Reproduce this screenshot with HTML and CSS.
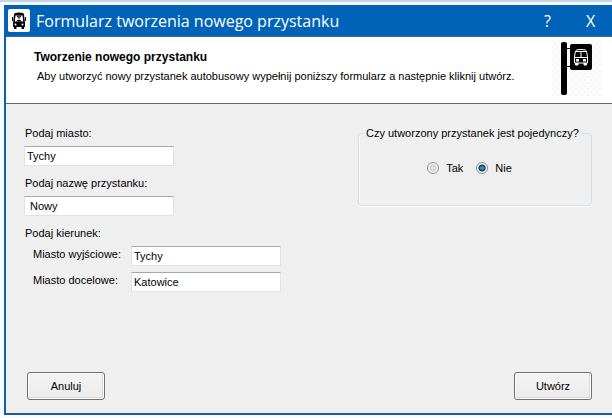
FILE: index.html
```html
<!DOCTYPE html>
<html lang="pl">
<head>
<meta charset="utf-8">
<title>Formularz tworzenia nowego przystanku</title>
<link rel="stylesheet" href="styles.css">
</head>
<body>
<form class="window">
  <header class="titlebar">
    <svg class="app-icon" viewBox="0 0 22 23" aria-hidden="true">
      <rect width="22" height="23" rx="2" fill="#fff"/>
      <path d="M6 5.500Q6 3.500 11 3.500T16 5.500L17 14V18H16V20H13.500V18H8.500V20H6V18H5V14Z" fill="#000"/>
      <path d="M7.500 6.500H14.500L15.200 12.500H6.800Z" fill="#fff"/>
      <path d="M9 7L11 9.500L13 7Z" stroke="#000" stroke-width=".8" fill="#888"/>
      <path d="M8 12.500L10 10.800H12L14 12.500Z" fill="#000"/>
      <path d="M4.500 8V12M17.500 8V12" stroke="#000"/>
      <circle cx="7.500" cy="15.500" r="1" fill="#fff"/><circle cx="14.500" cy="15.500" r="1" fill="#fff"/>
    </svg>
    <h1 class="title">Formularz tworzenia nowego przystanku</h1>
    <button class="caption-button" type="button">?</button>
    <button class="caption-button" type="button">X</button>
  </header>
  <section class="banner">
    <div class="banner-text">
      <h2 class="banner-title">Tworzenie nowego przystanku</h2>
      <p class="banner-note">Aby utworzyć nowy przystanek autobusowy wypełnij poniższy formularz a następnie kliknij utwórz.</p>
    </div>
    <svg class="stop-icon" viewBox="0 0 50 55" aria-hidden="true">
      <defs><pattern id="hatch" width="6" height="6" patternUnits="userSpaceOnUse"><path d="M0 0L6 6M6 0L0 6" stroke="#eee" stroke-width=".7"/></pattern></defs>
      <rect width="50" height="55" fill="url(#hatch)"/>
      <rect x="9" y="1" width="6" height="53" rx="2"/>
      <path d="M15 7.500H19M15 25.500H19" stroke="#000"/>
      <rect x="18" y="3" width="22" height="26" rx="2"/>
      <path d="M23.500 10Q23.500 8.500 29 8.500T34.500 10L35.500 16V22H22.500V16Z" fill="#000" stroke="#fff"/>
      <path d="M24 10.500H34M29 10.500V16M23 16.500H35" stroke="#fff"/>
      <path d="M23.500 22V24H26V22M32 22V24H34.500V22" fill="#fff" stroke="#fff"/>
      <path d="M24 18H27V20.500H24ZM31 18H34V20.500H31Z" fill="#fff"/>
    </svg>
  </section>
  <main class="content">
    <div class="fields">
      <div class="field">
        <label for="city">Podaj miasto:</label>
        <input class="textbox" id="city" type="text" value="Tychy">
      </div>
      <div class="field">
        <label for="stop">Podaj nazwę przystanku:</label>
        <input class="textbox" id="stop" type="text" value=" Nowy">
      </div>
      <div class="field" role="group" aria-labelledby="direction">
        <span id="direction">Podaj kierunek:</span>
        <div class="direction">
          <label for="from">Miasto wyjściowe:</label>
          <input class="textbox" id="from" type="text" value="Tychy">
          <label for="to">Miasto docelowe:</label>
          <input class="textbox" id="to" type="text" value="Katowice">
        </div>
      </div>
    </div>
    <fieldset class="group">
      <legend>Czy utworzony przystanek jest pojedynczy?</legend>
      <div class="choices">
        <label class="choice"><input type="radio" name="single" value="tak">Tak</label>
        <label class="choice"><input type="radio" name="single" value="nie" checked>Nie</label>
      </div>
    </fieldset>
  </main>
  <footer class="actions">
    <button class="button" type="button">Anuluj</button>
    <button class="button" type="submit">Utwórz</button>
  </footer>
</form>
</body>
</html>
```
FILE: styles.css
```css
* {
  box-sizing: border-box;
}

body {
  margin: 0;
  min-height: 100vh;
  display: flex;
  border-top: 2px solid #c5d3e6;
  padding: 3px 0 3px 4px;
  background: #f5fbfe;
  color: #000;
  font: 11px/16px "Liberation Sans", Arial, sans-serif;
}

.window {
  flex: 1;
  min-width: 0;
  display: flex;
  flex-direction: column;
  border-left: 2px solid #0f5fae;
  border-bottom: 2px solid #1c5c98;
  background: #efefef;
}

.titlebar {
  display: flex;
  align-items: center;
  height: 32px;
  padding: 0 0 0 2px;
  border-bottom: 1px solid #4d6680;
  background: #0063b8;
  color: #fff;
}

.app-icon {
  width: 22px;
  height: 23px;
}

.title {
  flex: 1;
  margin: 0 0 0 6px;
  font: 16px/24px "Open Sans", sans-serif;
}

.caption-button {
  width: 43px;
  padding: 0;
  border: 0;
  background: none;
  color: inherit;
  font: 16px/24px "Open Sans", sans-serif;
}

.banner {
  display: flex;
  justify-content: space-between;
  height: 67px;
  padding: 4px 10px 0 28px;
  border-bottom: 1px solid #666;
  background: #fff;
}

.banner-text {
  padding-top: 8px;
}

.banner-title {
  margin: 0;
  font-size: 12px;
  line-height: 16px;
}

.banner-note {
  margin: 3px 0 0 3px;
  white-space: nowrap;
}

.stop-icon {
  flex: none;
  width: 50px;
  height: 55px;
}

.content {
  flex: 1;
  display: flex;
  justify-content: space-between;
  align-items: flex-start;
  padding: 21px 20px 0 18px;
}

.fields {
  display: flex;
  flex-direction: column;
  gap: 9px;
}

.field {
  display: flex;
  flex-direction: column;
  align-items: flex-start;
  gap: 5px;
}

.field > label,
.field > span {
  padding-left: 1px;
}

.textbox {
  width: 150px;
  height: 20px;
  padding: 0 2px;
  border: 1px solid #dfe2e6;
  border-top-color: #a6a8ad;
  border-radius: 1px;
  background: #fff;
  color: #000;
  font: inherit;
}

.direction {
  display: grid;
  grid-template-columns: 98px auto;
  gap: 6px 0;
  padding-left: 9px;
}

.group {
  width: 234px;
  height: 81px;
  margin: 0;
  padding: 0 5px;
  border: 1px solid #d5dfe5;
  border-radius: 4px;
  box-shadow: 0 1px #fff, inset 1px 0 #fafafa;
}

.group legend {
  padding: 0 2px;
  white-space: nowrap;
}

.choices {
  display: flex;
  justify-content: center;
  gap: 13px;
  padding: 19px 11px 0 0;
}

.choice {
  display: flex;
  align-items: center;
  gap: 7px;
}

.choice input {
  appearance: none;
  width: 12px;
  height: 12px;
  margin: 0;
  border: 1px solid #8e8f8f;
  border-radius: 50%;
  background: radial-gradient(circle at 5px 5px, #e6e6e6 1px, #c6c9cc 3px, #f4f4f4 4px);
}

.choice input:checked {
  background: radial-gradient(circle at 5px 5px, #5fb4d8 0, #1c6b97 2px, #10354f 3px, #f4f4f4 4px);
}

.actions {
  display: flex;
  justify-content: space-between;
  padding: 0 20px 13px 21px;
}

.button {
  width: 78px;
  height: 28px;
  padding: 0;
  border: 1px solid #707070;
  border-radius: 3px;
  background: linear-gradient(#f3f3f3, #ececec);
  box-shadow: inset 0 0 0 1px #fbfbfb, inset -2px -2px #dcdcdc;
  color: #000;
  font: inherit;
}
```
